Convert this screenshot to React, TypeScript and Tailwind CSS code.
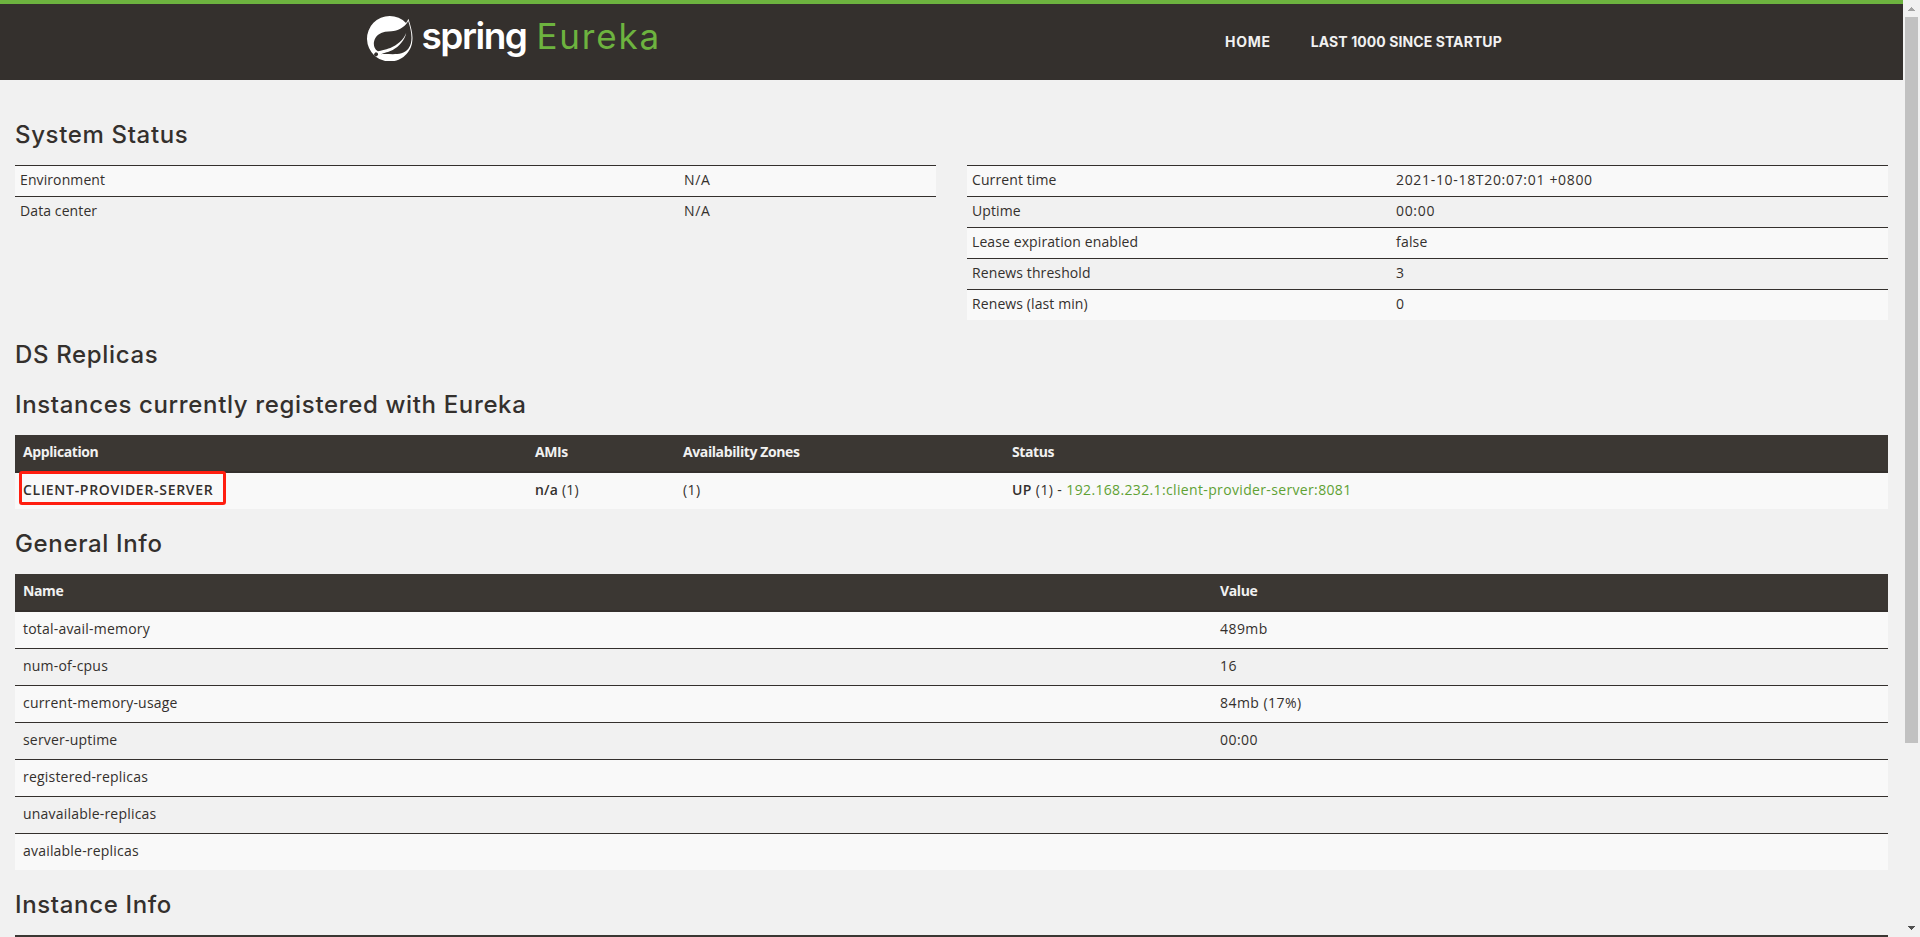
import type { ReactNode } from 'react'
import { SiSpring } from 'react-icons/si'

const environment = [
  ['Environment', 'N/A'],
  ['Data center', 'N/A'],
]

const status = [
  ['Current time', '2021-10-18T20:07:01 +0800'],
  ['Uptime', '00:00'],
  ['Lease expiration enabled', 'false'],
  ['Renews threshold', '3'],
  ['Renews (last min)', '0'],
]

const generalInfo = [
  ['total-avail-memory', '489mb'],
  ['num-of-cpus', '16'],
  ['current-memory-usage', '84mb (17%)'],
  ['server-uptime', '00:00'],
  ['registered-replicas', ''],
  ['unavailable-replicas', ''],
  ['available-replicas', ''],
]

function Heading({ children, className = 'mb-[17px]' }: { children: ReactNode; className?: string }) {
  return (
    <h1 className={`mt-[22px] h-[26px] font-['Inter',sans-serif] text-2xl leading-[26px] font-medium tracking-[0.65px] ${className}`}>
      {children}
    </h1>
  )
}

function StatusTable({ rows, labelWidth }: { rows: string[][]; labelWidth: string }) {
  return (
    <table className="w-[921px] table-fixed border-separate border-spacing-0">
      <tbody>
        {rows.map(([label, value]) => (
          <tr key={label} className="odd:bg-[#f9f9f9]">
            <td className={`${labelWidth} border-t border-[#34302d] px-[5px] pt-1 pb-1.5 tracking-[0.1px]`}>{label}</td>
            <td className={`border-t border-[#34302d] px-[5px] pt-1 pb-1.5 ${value === 'false' ? 'tracking-[0.2px]' : 'tracking-[0.68px]'}`}>
              {value}
            </td>
          </tr>
        ))}
      </tbody>
    </table>
  )
}

function HeadCell({ children, className = '' }: { children?: ReactNode; className?: string }) {
  return (
    <th className={`border-b-2 border-[#34302d] bg-[#3b3733] px-2 pt-[7px] pb-[9px] text-left font-bold tracking-[-0.4px] text-[#f1f1f1] ${className}`}>
      {children}
    </th>
  )
}

export default function App() {
  return (
    <div className="flex h-[937px] overflow-hidden bg-[#f1f1f1] font-['Open_Sans',sans-serif] text-sm leading-5 text-[#34302d]">
      <div className="w-[1903px]">
        <header className="flex h-20 border-t-4 border-[#6db33f] bg-[#34302d] pl-[367px]">
          <div className="flex w-[858px] font-['Inter',sans-serif]">
            <SiSpring className="mt-[11.5px] size-[45.5px] text-white" />
            <div className="mt-3 ml-[9px] flex h-10 items-baseline leading-10">
              <span className="w-[115px] text-[37px] font-semibold tracking-[-1.5px] text-white">spring</span>
              <span className="text-[35px] tracking-[1.8px] text-[#6db33f]">Eureka</span>
            </div>
          </div>
          <nav className="flex h-[76px] items-center gap-10 font-['Inter',sans-serif] font-bold text-[#f1f1f1]">
            <a className="tracking-[0.75px]">HOME</a>
            <a className="tracking-[0.08px]">LAST 1000 SINCE STARTUP</a>
          </nav>
        </header>

        <main className="flex flex-col px-[15px] pt-5">
          <Heading>System Status</Heading>
          <div className="flex items-start gap-[31px]">
            <StatusTable rows={environment} labelWidth="w-[664px]" />
            <StatusTable rows={status} labelWidth="w-[424px]" />
          </div>

          <Heading className="mb-[2px]">DS Replicas</Heading>

          <Heading>Instances currently registered with Eureka</Heading>
          <table className="w-full table-fixed border-separate border-spacing-0">
            <thead>
              <tr>
                <HeadCell className="w-[512px]">Application</HeadCell>
                <HeadCell className="w-[148px]">AMIs</HeadCell>
                <HeadCell className="w-[329px]">Availability Zones</HeadCell>
                <HeadCell>Status</HeadCell>
              </tr>
            </thead>
            <tbody>
              <tr className="bg-[#f9f9f9]">
                <td className="relative px-2 pt-[7px] pb-[9px]">
                  <b className="font-semibold tracking-[0.7px]">CLIENT-PROVIDER-SERVER</b>
                  <span className="absolute -top-0.5 left-1 h-[34px] w-[207px] rounded-[3px] border-3 border-[#ff1e10]" />
                </td>
                <td className="px-2 pt-[7px] pb-[9px] tracking-[0.2px]">
                  <b className="font-semibold">n/a</b> (1)
                </td>
                <td className="px-2 pt-[7px] pb-[9px] tracking-[0.4px]">(1)</td>
                <td className="px-2 pt-[7px] pb-[9px] tracking-[0.4px]">
                  <b className="font-semibold">UP</b> (1) -{' '}
                  <a className="tracking-[0.35px] text-[#5fa134]">192.168.232.1:client-provider-server:8081</a>
                </td>
              </tr>
            </tbody>
          </table>

          <Heading>General Info</Heading>
          <table className="w-full table-fixed border-separate border-spacing-0">
            <thead>
              <tr>
                <HeadCell className="w-[1197px]">Name</HeadCell>
                <HeadCell>Value</HeadCell>
              </tr>
            </thead>
            <tbody>
              {generalInfo.map(([name, value], index) => (
                <tr key={name} className="odd:bg-[#f9f9f9]">
                  <td className={`${index > 0 ? 'border-t' : ''} border-[#34302d] px-2 pt-[7px] pb-[9px] tracking-[0.2px]`}>{name}</td>
                  <td className={`${index > 0 ? 'border-t' : ''} border-[#34302d] px-2 pt-[7px] pb-[9px] tracking-[0.45px]`}>{value}</td>
                </tr>
              ))}
            </tbody>
          </table>

          <Heading>Instance Info</Heading>
          <div className="h-9 shrink-0 bg-[#3b3733]" />
        </main>
      </div>

      {/* scrollbar */}
      <div className="flex w-[17px] flex-col items-center bg-[#f1f1f1]">
        <svg className="mt-[7px] h-1 w-[7px] fill-[#a3a3a3]" viewBox="0 0 7 4">
          <path d="M3 0h1v1h1v1h1v1h1v1H0V3h1V2h1V1h1z" />
        </svg>
        <div className="mt-1.5 h-[726px] w-[13px] bg-[#c1c1c1]" />
        <svg className="mt-[183px] h-1 w-[7px] fill-[#505050]" viewBox="0 0 7 4">
          <path d="M0 0h7v1H6v1H5v1H4v1H3V3H2V2H1V1H0z" />
        </svg>
      </div>
    </div>
  )
}
